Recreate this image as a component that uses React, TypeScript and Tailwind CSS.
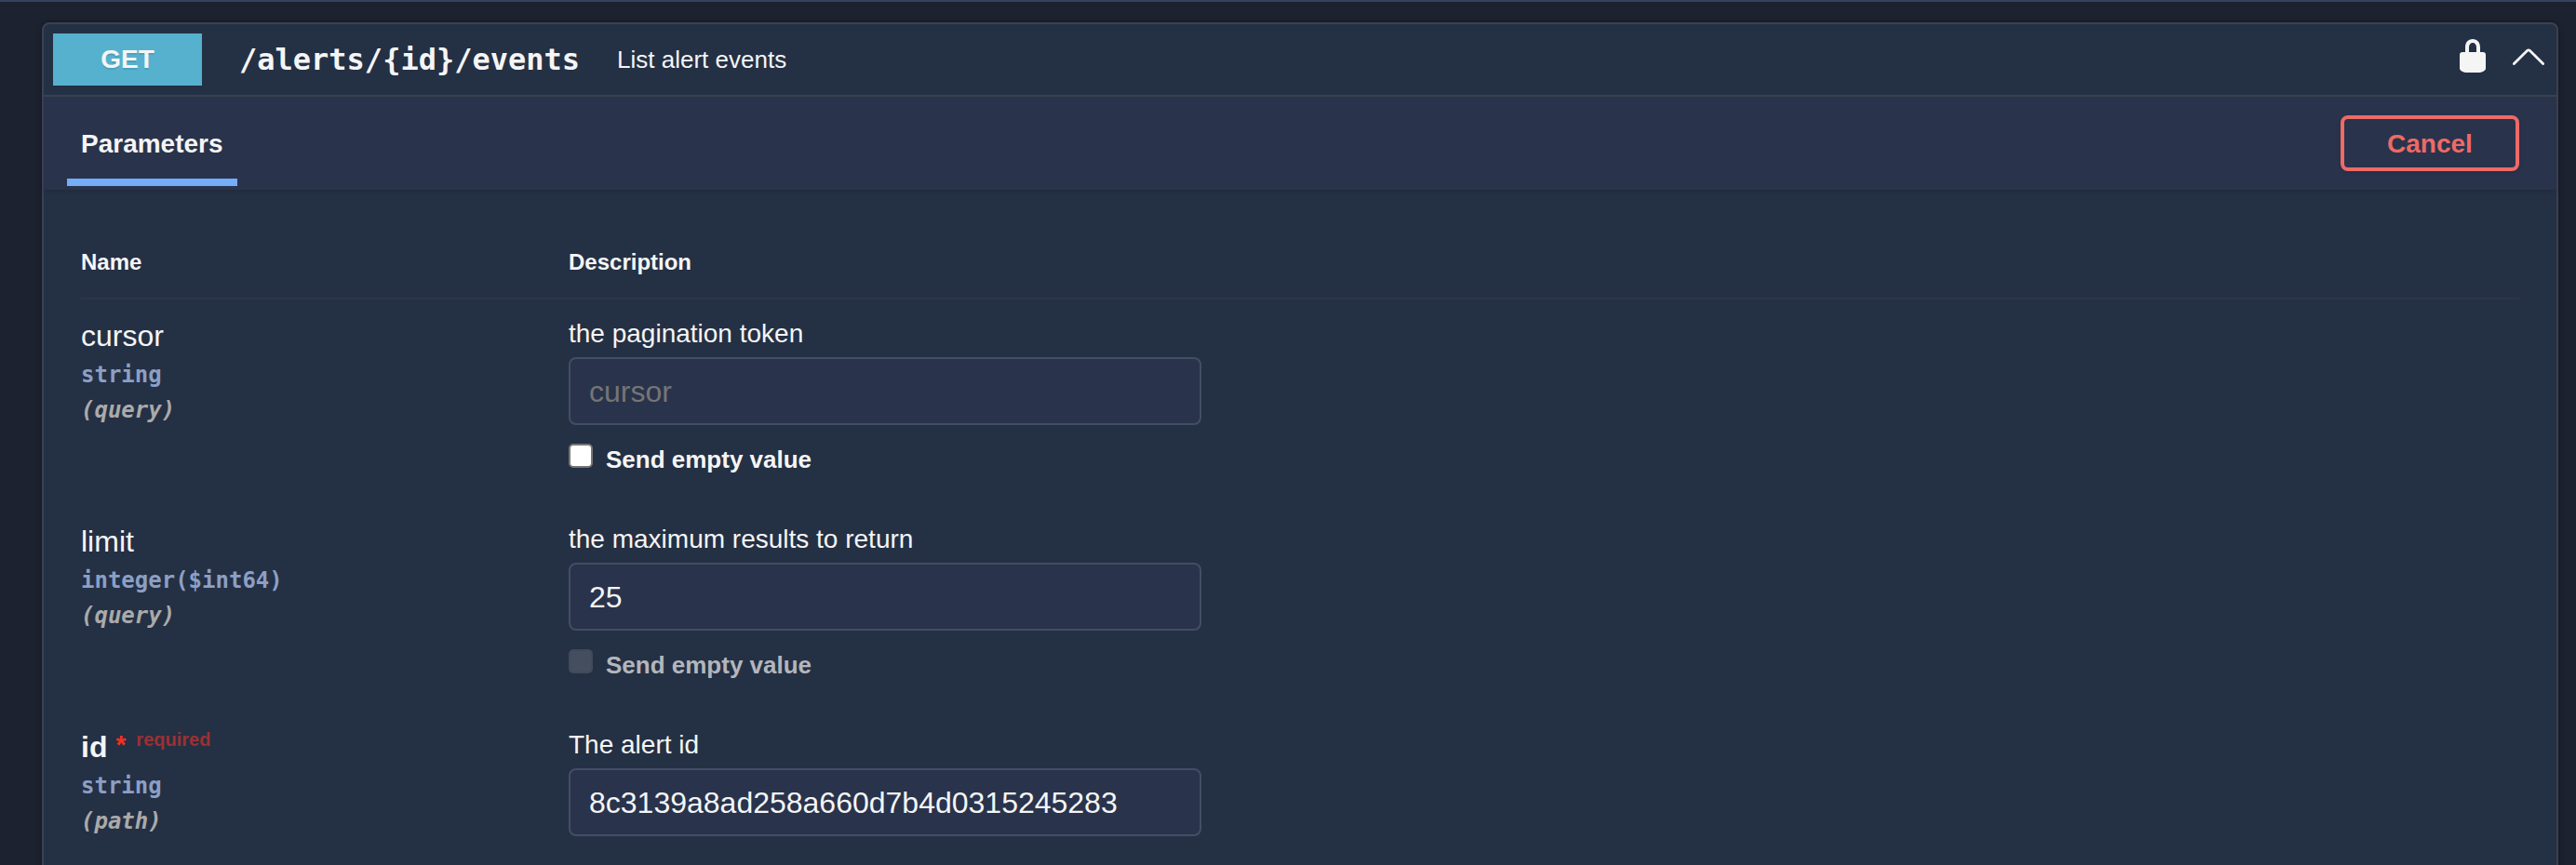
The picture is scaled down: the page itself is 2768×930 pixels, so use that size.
import { clsx } from "clsx";

type Param = {
  name: string;
  type: string;
  location: string;
  description: string;
  value?: string;
  required?: boolean;
  allowEmpty?: boolean;
  emptyDisabled?: boolean;
};

const params: Param[] = [
  {
    name: "cursor",
    type: "string",
    location: "(query)",
    description: "the pagination token",
    allowEmpty: true,
  },
  {
    name: "limit",
    type: "integer($int64)",
    location: "(query)",
    description: "the maximum results to return",
    value: "25",
    allowEmpty: true,
    emptyDisabled: true,
  },
  {
    name: "id",
    type: "string",
    location: "(path)",
    description: "The alert id",
    value: "8c3139a8ad258a660d7b4d0315245283",
    required: true,
  },
];

function LockIcon() {
  return (
    <svg viewBox="0 0 28 36" className="h-9 w-7" fill="#f5f5f5">
      <path d="M0 17q0-3 3-3h3V9c0-5.500 3-9 8-9s8 3.500 8 9v5h3q3 0 3 3v14.500C28 34 24 36 20 36H8c-4 0-8-2-8-4.500zM10 14h8V9c0-3-1.500-5-4-5s-4 2-4 5z" />
    </svg>
  );
}

function ChevronIcon() {
  return (
    <svg viewBox="0 0 34 18" className="h-[18px] w-[34px]" fill="none">
      <path
        d="M1.400 16.600L15.500 2.600Q17 1.200 18.500 2.600L32.600 16.600"
        stroke="#f5f5f5"
        strokeWidth="2.800"
        strokeLinecap="round"
      />
    </svg>
  );
}

function ParamRow({ param }: { param: Param }) {
  return (
    <div className="flex h-[221px]">
      <div className="w-[524px] pt-[21px]">
        <div className={clsx("flex text-[32px] leading-9", param.required && "font-bold")}>
          {param.name}
          {param.required && (
            <>
              <span className="ml-[9px] text-[28px] leading-8 text-[#ee3322]">*</span>
              <span className="-mt-px ml-[11px] text-[20px] leading-[22px] text-[#9d3033]">required</span>
            </>
          )}
        </div>
        <div className="mt-[5px] font-['DejaVu_Sans_Mono',monospace] text-2xl leading-[38px] font-bold text-[#8c9fc4]">
          {param.type}
        </div>
        <div className="font-['DejaVu_Sans_Mono',monospace] text-2xl leading-[38px] font-bold text-[#aaaaaa] italic">
          {param.location}
        </div>
      </div>
      <div className="pt-[21px]">
        <p className="text-[28px] leading-8">{param.description}</p>
        <input
          type="text"
          placeholder={param.name}
          defaultValue={param.value}
          className="mt-[9px] block h-[73px] w-[680px] rounded-lg border-2 border-[#434e64] bg-[#29334c] px-5 pt-px text-[32px] text-[#f5f5f5] placeholder:text-[#757575]"
        />
        {param.allowEmpty && (
          <label className={clsx("mt-5 flex text-[26px] leading-8 font-bold", param.emptyDisabled && "text-[#b3b6bc]")}>
            <input
              type="checkbox"
              disabled={param.emptyDisabled}
              className={clsx(
                "mr-3.5 size-[26px] appearance-none rounded-[5px] border-2",
                param.emptyDisabled ? "border-[#414a5a] bg-[#454e5f]" : "border-[#767676] bg-white",
              )}
            />
            <span className="mt-px">Send empty value</span>
          </label>
        )}
      </div>
    </div>
  );
}

export default function App() {
  return (
    <div className="h-[930px] overflow-hidden border-t-2 border-[#36425f] bg-[#1c222f] pt-[22px] pr-[19px] pl-[45px] font-['Liberation_Sans',Arial,sans-serif] text-[#f5f5f5]">
      <div className="h-[960px] rounded-lg border-2 border-[#3b4151] bg-[#243044] shadow-[0_0_6px_rgba(0,0,0,0.3)]">
        <div className="flex h-[78px] items-center border-b-2 border-[#3b4151] pr-[13px] pl-2.5">
          <span className="w-40 bg-[#55b1ce] text-center text-[28px] leading-[56px] font-bold [text-shadow:0_2px_0_rgba(0,0,0,0.1)]">
            GET
          </span>
          <span className="ml-10 font-['DejaVu_Sans_Mono',monospace] text-[32px] font-bold">/alerts/{"{id}"}/events</span>
          <span className="ml-10 grow text-[26px]">List alert events</span>
          <span className="mr-[29px] pb-2">
            <LockIcon />
          </span>
          <span className="pb-1.5">
            <ChevronIcon />
          </span>
        </div>

        <div className="flex h-[100px] items-center justify-between bg-[#29334c] pr-10 pl-[25px] shadow-[0_2px_4px_rgba(0,0,0,0.1)]">
          <h4 className="mt-[17px] h-[75px] w-[183px] border-b-8 border-[#76adf9] pl-[15px] text-[28px] leading-8 font-bold">
            <span className="block pt-3.5">Parameters</span>
          </h4>
          <button className="h-[60px] w-48 rounded-lg border-4 border-[#ee6a66] pt-px text-[28px] font-bold text-[#ee6a66] shadow-[0_2px_4px_rgba(0,0,0,0.1)]">
            Cancel
          </button>
        </div>

        <div className="px-10">
          <div className="flex h-[118px] border-b-2 border-[#2e3548] pt-16 text-2xl leading-7 font-bold">
            <div className="w-[524px]">Name</div>
            <div>Description</div>
          </div>
          {params.map((param) => (
            <ParamRow key={param.name} param={param} />
          ))}
        </div>
      </div>
    </div>
  );
}
